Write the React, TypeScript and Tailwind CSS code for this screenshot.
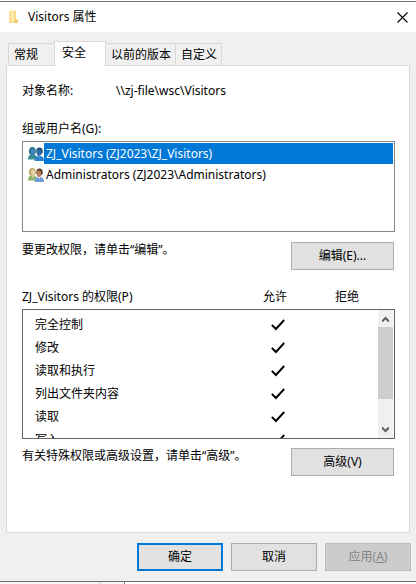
import { useState } from "react";

const tabs = [
  { name: "常规", width: "w-12" },
  { name: "安全", width: "w-13" },
  { name: "以前的版本", width: "w-[70px]" },
  { name: "自定义", width: "w-[46px]" },
];

const principals = ["ZJ_Visitors (ZJ2023\\ZJ_Visitors)", "Administrators (ZJ2023\\Administrators)"];

const permissions = ["完全控制", "修改", "读取和执行", "列出文件夹内容", "读取", "写入"];

function FolderIcon() {
  return (
    <svg width="10" height="14" viewBox="0 0 10 14" aria-hidden="true">
      <path d="M0 1h6v12H0z" fill="#fbe39c" />
      <path d="M1 .5h6v9l2 1V13H1z" fill="#f9dc8a" />
      <path d="M2.500 1.500h2v10h-2z" fill="#fdedc0" />
      <path d="M6 9.500h3V13H5z" fill="#f2c969" />
    </svg>
  );
}

function GroupIcon({ selected }: { selected: boolean }) {
  const c = selected
    ? { hairA: "#2b7591", faceA: "#4089b4", bodyA: "#3a8d92", hairB: "#1c4878", faceB: "#2f6da8", bodyB: "#2f82ca", shirt: "#5b9fd2" }
    : { hairA: "#b9a765", faceA: "#e6d2ae", bodyA: "#8fb56a", hairB: "#4d3a2c", faceB: "#b9805a", bodyB: "#6f9fd6", shirt: "#d5e3f2" };
  return (
    <svg width="16" height="16" viewBox="0 0 16 16" aria-hidden="true">
      <path d="M0 13.500c0-3.500 1-4.500 3-5h3c2 .5 3 1.800 3 5z" fill={c.bodyA} />
      <path d="M1 7C.5 3 2 1 4.600 1S8.200 3 7.800 7L6 9H3z" fill={c.hairA} />
      <ellipse cx="5" cy="5.500" rx="2" ry="3" fill={c.faceA} />
      <path d="M3.500 8.500 5 11l1.700-2.500z" fill={c.faceA} />
      <path d="M6.500 15c0-3.200 1.300-4.700 3.300-5h3c2 .3 3.200 1.800 3.200 5z" fill={c.bodyB} />
      <path d="M8.300 6.500C8 3 9.300 1.500 11.500 1.500s3.600 1.700 3.200 5.200L13 8.500z" fill={c.hairB} />
      <ellipse cx="11" cy="6.700" rx="2.300" ry="3.200" fill={c.faceB} />
      <path d="M10 10l1.300 2.200L12.600 10z" fill={c.shirt} />
    </svg>
  );
}

function CheckIcon() {
  return (
    <svg className="mx-auto block" width="14" height="12" viewBox="0 0 14 12" aria-label="允许" role="img">
      <path d="M0.800 5.800 4.900 10 13.200 1" fill="none" stroke="#000" strokeWidth="1.900" />
    </svg>
  );
}

function ScrollArrow({ down = false }: { down?: boolean }) {
  return (
    <svg width="7" height="6" viewBox="0 0 7 6" aria-hidden="true">
      <path d={down ? "M0 .5 3.500 4 7 .5" : "M0 5.500 3.500 2 7 5.500"} fill="none" stroke="#5c5c5c" strokeWidth="2" />
    </svg>
  );
}

const plainButton = "h-7 border border-[#adadad] bg-[#e1e1e1] text-center";

export default function App() {
  const [tab, setTab] = useState(1);
  const [chosen, setChosen] = useState(0);

  return (
    <div className="min-h-screen bg-white pt-px font-['Noto_Sans','Noto_Sans_CJK_SC',sans-serif] text-xs leading-4 text-black">
      <main className="border-y border-[#6d6d6d] bg-[#f0f0f0]">
        <header className="flex h-[30px] items-center bg-white pr-2 pl-[9px]">
          <FolderIcon />
          <h1 className="ml-[9px] flex-1">Visitors 属性</h1>
          <button aria-label="关闭" className="flex size-3 items-center justify-center">
            <svg width="11" height="11" viewBox="0 0 11 11" aria-hidden="true">
              <path d="M.5.5l10 10M10.500.5l-10 10" stroke="#000" strokeWidth="1.100" />
            </svg>
          </button>
        </header>

        <div className="pt-[9px] pb-2.5">
          <div role="tablist" className="flex items-end px-2">
            {tabs.map((t, i) => (
              <button
                key={t.name}
                role="tab"
                aria-selected={i === tab}
                onClick={() => setTab(i)}
                className={`${t.width} shrink-0 border-t border-r border-[#d9d9d9] text-left whitespace-nowrap ${
                  i === tab ? "z-10 -mb-px h-[25px] border-l bg-white pb-0.5 pl-[7px]" : "h-[22px] pl-[5px]"
                } ${i === 0 ? "-mr-0.5 border-l" : ""}`}
              >
                {t.name}
              </button>
            ))}
          </div>

          <section className="mx-1.5 border border-[#d9d9d9] bg-white pt-[17px] pr-3.5 pb-14 pl-[15px]">
            <div className="flex">
              <span className="w-[94px]">对象名称:</span>
              <span>{"\\\\zj-file\\wsc\\Visitors"}</span>
            </div>

            <h2 id="principals" className="mt-[22px] mb-1">组或用户名(G):</h2>
            <ul role="listbox" aria-labelledby="principals" className="h-[91px] border border-[#828790] p-px">
              {principals.map((p, i) => (
                <li
                  key={p}
                  role="option"
                  aria-selected={i === chosen}
                  onClick={() => setChosen(i)}
                  className="flex h-[21px] items-center pl-1"
                >
                  <GroupIcon selected={i === chosen} />
                  <span className={`flex h-full flex-1 items-center pl-0.5 ${i === chosen ? "bg-[#0078d7] text-white" : ""}`}>
                    {p}
                  </span>
                </li>
              ))}
            </ul>

            <div className="mt-2.5 flex justify-between pr-px">
              <p>要更改权限，请单击“编辑”。</p>
              <button className={`${plainButton} w-[103px]`}>编辑(E)...</button>
            </div>

            <div className="mt-[19px] mb-1 flex pr-3">
              <h2 id="permissions" className="flex-1">ZJ_Visitors 的权限(P)</h2>
              <span className="w-[72px] text-center">允许</span>
              <span className="w-[72px] text-center">拒绝</span>
            </div>
            <div className="flex h-[130px] overflow-hidden border border-[#646464] pr-px">
              <div className="flex-1 overflow-hidden pt-[3px]">
                <table aria-labelledby="permissions" className="w-full table-fixed">
                  <tbody>
                    {permissions.map((p) => (
                      <tr key={p} className="h-[23px]">
                        <th scope="row" className="pl-3 text-left font-normal">{p}</th>
                        <td className="w-[72px]">
                          <CheckIcon />
                        </td>
                        <td className="w-16" />
                      </tr>
                    ))}
                  </tbody>
                </table>
              </div>
              <div className="flex w-[15px] flex-col bg-[#f0f0f0]">
                <button aria-label="向上滚动" className="flex h-[17px] items-center justify-center">
                  <ScrollArrow />
                </button>
                <div className="h-[72px] bg-[#cdcdcd]" />
                <div className="flex-1" />
                <button aria-label="向下滚动" className="flex h-[17px] items-center justify-center">
                  <ScrollArrow down />
                </button>
              </div>
            </div>

            <div className="mt-[9px] flex justify-between pr-px">
              <p>有关特殊权限或高级设置，请单击“高级”。</p>
              <button className={`${plainButton} w-[103px]`}>高级(V)</button>
            </div>
          </section>

          <footer className="mt-2.5 flex justify-end gap-2 pr-[5px]">
            <button className="h-7 w-[86px] border-2 border-[#0078d7] bg-[#e1e1e1]">确定</button>
            <button className={`${plainButton} w-[86px]`}>取消</button>
            <button disabled className="h-7 w-[86px] border border-[#bfbfbf] bg-[#cccccc] text-[#838383]">
              应用(<u>A</u>)
            </button>
          </footer>
        </div>
      </main>
      <div className="flex h-0.5">
        <div className="w-[100px] border-r border-[#cccccc] bg-[#f7f7f7]" />
        <div className="w-[25px] border-r border-[#8a8a8a] bg-[#f7f7f7]" />
      </div>
    </div>
  );
}
